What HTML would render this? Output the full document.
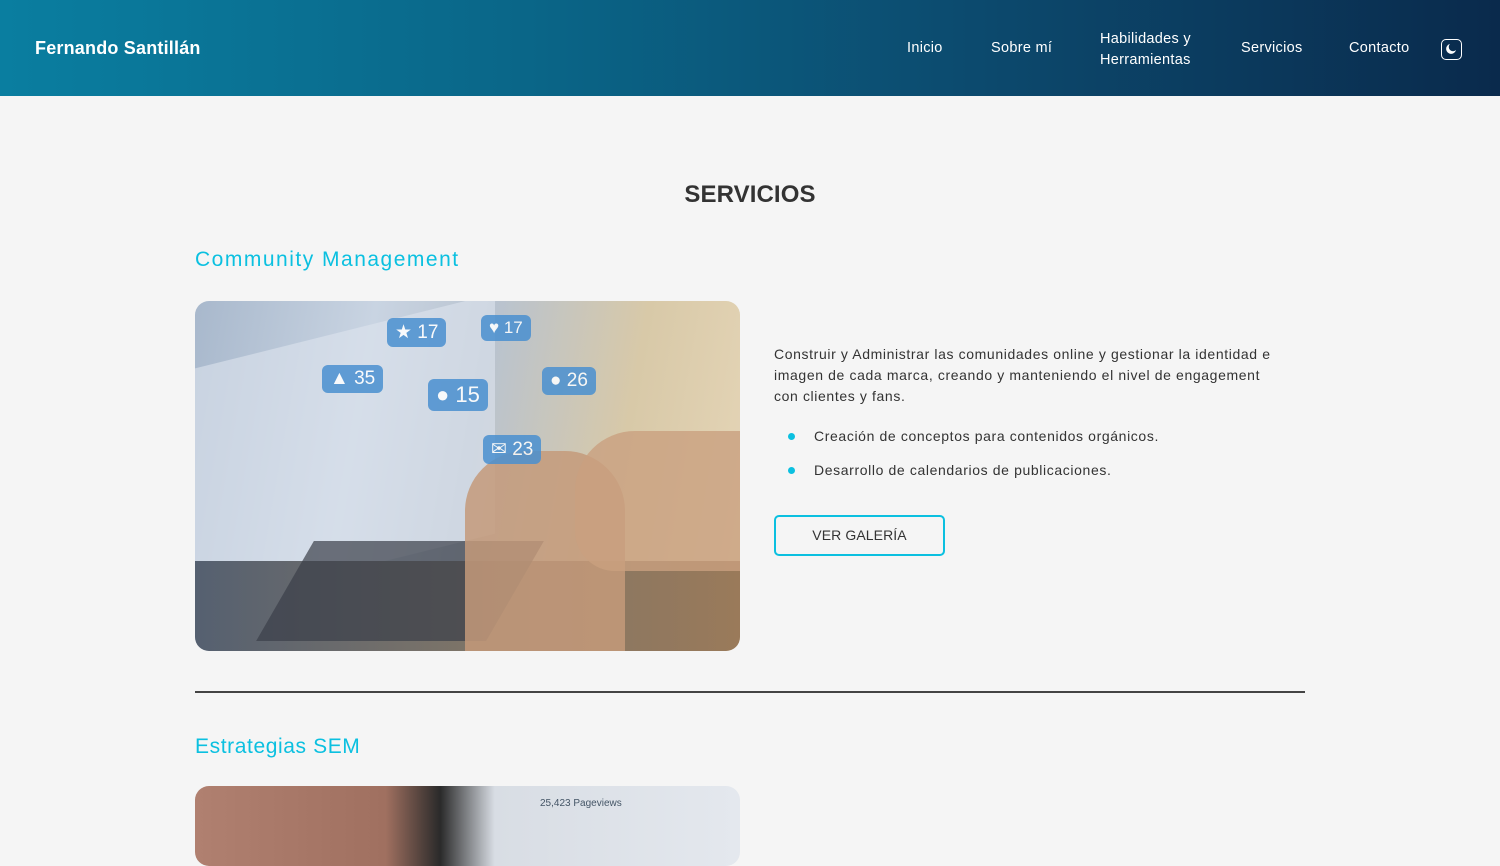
<!DOCTYPE html>
<html><head><meta charset="utf-8"><style>
*{margin:0;padding:0;box-sizing:border-box}
body{width:1500px;height:830px;overflow:hidden;background:#f5f5f5;font-family:"Liberation Sans",sans-serif;color:#333;position:relative}
header{position:absolute;left:0;top:0;width:1500px;height:96px;background:linear-gradient(90deg,#0a7ea0 0%,#0a6688 35%,#0c4a6e 65%,#0a2a4c 100%);color:#fff}
.logo{position:absolute;left:35px;top:38px;font-size:18px;font-weight:bold;letter-spacing:0.2px}
.nav{position:absolute;top:40px;font-size:14.5px;letter-spacing:0.3px}
.moon{position:absolute;left:1441px;top:39px;width:21px;height:21px;border:1.5px solid #fff;border-radius:5px}
h2{position:absolute;left:0;width:1500px;top:181px;text-align:center;font-size:24px;font-weight:bold;color:#333;letter-spacing:0.1px}
h3{position:absolute;left:195px;font-size:21px;font-weight:normal;color:#0bc0e0;letter-spacing:1.5px}
.img{position:absolute;left:195px;width:545px;border-radius:14px;overflow:hidden}
p{position:absolute;left:774px;top:344px;font-size:14px;line-height:21px;letter-spacing:0.62px;color:#333}
.li{position:absolute;left:814px;font-size:14px;letter-spacing:0.62px}
.li:before{content:"";position:absolute;left:-26px;top:5px;width:7px;height:7px;border-radius:50%;background:#0bc0e0}
.btn{position:absolute;left:774px;top:515px;width:171px;height:41px;border:2px solid #0bc0e0;border-radius:5px;text-align:center;line-height:37px;font-size:14px;letter-spacing:0.1px}
hr{position:absolute;left:195px;top:691px;width:1110px;border:0;border-top:2px solid #444}
.b{position:absolute;background:#4a90d0;opacity:.85;color:#fff;border-radius:6px;font-size:19px;padding:3px 8px}
</style></head><body>
<header>
<div class="logo">Fernando Santillán</div>
<div class="nav" style="left:907px">Inicio</div>
<div class="nav" style="left:991px">Sobre mí</div>
<div class="nav" style="left:1100px;top:29px;line-height:21px">Habilidades y<br>Herramientas</div>
<div class="nav" style="left:1241px">Servicios</div>
<div class="nav" style="left:1349px">Contacto</div>
<div class="moon"><svg width="18" height="18" viewBox="0 0 18 18"><path d="M8 4a5 5 0 1 0 6 6 4 4 0 0 1-6-6z" fill="#fff"/></svg></div>
</header>
<h2>SERVICIOS</h2>
<h3 style="top:248px">Community Management</h3>
<div class="img" style="top:301px;height:350px;background:linear-gradient(100deg,#a8b8cc 0%,#c9d4e2 30%,#b9c3cf 50%,#d8c9a8 75%,#e6d6b8 100%)">
<div style="position:absolute;left:0;top:30px;width:300px;height:240px;background:#dde4ee;transform:skewY(-14deg);opacity:.6"></div>
<div style="position:absolute;left:0;top:260px;width:545px;height:90px;background:linear-gradient(90deg,#556070,#7d7468 50%,#9a7a5a)"></div>
<div style="position:absolute;left:90px;top:240px;width:230px;height:100px;background:#3a3e48;transform:skewX(-30deg);opacity:.7"></div>
<div style="position:absolute;left:270px;top:150px;width:160px;height:200px;background:#c49a7a;border-radius:60px 60px 0 0;opacity:.85"></div>
<div style="position:absolute;left:380px;top:130px;width:165px;height:140px;background:#c9a080;border-radius:60px 0 0 40px;opacity:.8"></div>
<div class="b" style="left:192px;top:17px">★ 17</div>
<div class="b" style="left:286px;top:14px;font-size:17px">♥ 17</div>
<div class="b" style="left:127px;top:64px">▲ 35</div>
<div class="b" style="left:233px;top:78px;font-size:22px">● 15</div>
<div class="b" style="left:347px;top:66px">● 26</div>
<div class="b" style="left:288px;top:134px">✉ 23</div>
</div>
<p>Construir y Administrar las comunidades online y gestionar la identidad e<br>imagen de cada marca, creando y manteniendo el nivel de engagement<br>con clientes y fans.</p>
<div class="li" style="top:428px">Creación de conceptos para contenidos orgánicos.</div>
<div class="li" style="top:462px">Desarrollo de calendarios de publicaciones.</div>
<div class="btn">VER GALERÍA</div>
<hr>
<h3 style="top:735px;letter-spacing:0.6px">Estrategias SEM</h3>
<div class="img" style="top:786px;height:80px;background:linear-gradient(90deg,#b08070 0%,#a07060 35%,#2a2a2a 45%,#d8dde4 55%,#e4e8ee 100%)"><div style="position:absolute;left:345px;top:12px;font-size:10px;color:#456">25,423 Pageviews</div></div>
</body></html>
